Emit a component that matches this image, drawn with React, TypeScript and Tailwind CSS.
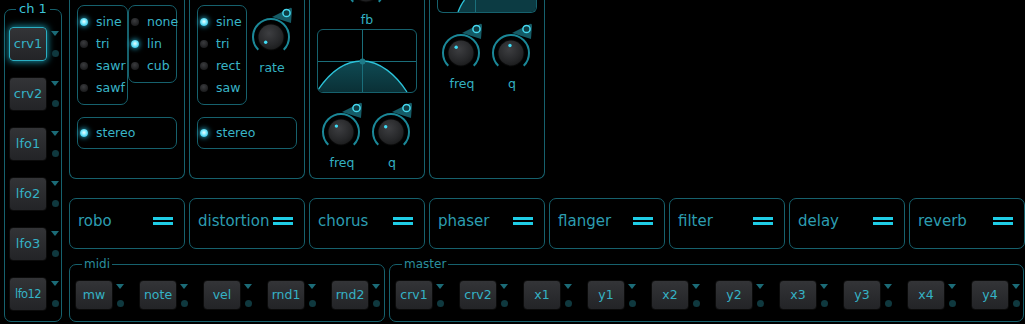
import clsx from 'clsx';

const LINE = 'border-[#16616d]';

function Led({ on }: { on?: boolean }) {
    return on ? (
        <span className="w-[8px] h-[8px] shrink-0 rounded-full bg-[radial-gradient(circle_at_50%_45%,#effeff_0%,#8aeeff_35%,#26bfe2_80%)] shadow-[0_0_5px_1px_rgba(40,200,235,0.7)]" />
    ) : (
        <span className="w-[8px] h-[8px] shrink-0 rounded-full bg-[radial-gradient(circle_at_45%_35%,#3a3b3e_0%,#232426_55%,#111112_100%)]" />
    );
}

function Radio({ label, on }: { label: string; on?: boolean }) {
    return (
        <div className="flex items-center h-[22px] gap-[8px]">
            <Led on={on} />
            <span className="text-[12.5px] leading-[14px] text-[#38b4c7]">{label}</span>
        </div>
    );
}

function Stereo() {
    return (
        <div className={clsx('mt-[12px] w-[100px] h-[32px] border rounded-[7px] flex items-center pl-[2px]', LINE)}>
            <Radio label="stereo" on />
        </div>
    );
}

function Knob({ label, angle }: { label: string; angle: number }) {
    const cx = 24;
    const cy = 32;
    const a = (angle * Math.PI) / 180;
    const dx = cx + 7.5 * Math.sin(a);
    const dy = cy - 7.5 * Math.cos(a);
    return (
        <div className="w-[50px] shrink-0 flex flex-col items-center">
            <svg width="50" height="47" viewBox="0 0 50 47" className="block">
                <defs>
                    <radialGradient id="knobFace" cx="42%" cy="35%" r="70%">
                        <stop offset="0" stopColor="#3d3e41" />
                        <stop offset="0.7" stopColor="#262729" />
                        <stop offset="1" stopColor="#1a1b1c" />
                    </radialGradient>
                </defs>
                {/* mod wedge */}
                <path
                    d={`M${cx + 1},${cy - 20} L${cx + 19},${cy - 29} Q${cx + 21},${cy - 30} ${cx + 21},${cy - 27} L${cx + 20},${cy - 14} Z`}
                    fill="#155b66"
                />
                <path
                    d={`M${cx - 12.73},${cy + 12.73} A18 18 0 1 1 ${cx + 12.73},${cy + 12.73}`}
                    fill="none"
                    stroke="#1b8898"
                    strokeWidth="2"
                />
                <circle cx={cx} cy={cy} r="13.5" fill="#080808" />
                <circle cx={cx} cy={cy} r="12.5" fill="url(#knobFace)" />
                <circle cx={dx} cy={dy} r="1.7" fill="#3fdcf5" />
                <circle cx={cx + 15.5} cy={cy - 24} r="3.6" fill="#0e3d44" stroke="#45d9f0" strokeWidth="1.5" />
            </svg>
            <span className="mt-[9px] h-[14px] leading-[14px] text-[12.5px] text-[#33b0c2]">{label}</span>
        </div>
    );
}

function Side({ big }: { big?: boolean }) {
    return (
        <div className="w-[8px] flex flex-col items-center pt-[4px]">
            <div className="w-0 h-0 border-l-[4px] border-r-[4px] border-t-[5px] border-l-transparent border-r-transparent border-t-[#1b6b77]" />
            <div className={clsx('w-[7px] h-[7px] rounded-full bg-[#0f383e]', big ? 'mt-[14px]' : 'mt-[11px]')} />
        </div>
    );
}

function Btn({ label, big, sel, tight }: { label: string; big?: boolean; sel?: boolean; tight?: boolean }) {
    return (
        <div
            className={clsx(
                'w-[38px] rounded-[4px] border flex items-center justify-center bg-gradient-to-b from-[#333437] to-[#232427]',
                big ? 'h-[34px]' : 'h-[30px]',
                sel ? 'border-[#2aaec2] shadow-[0_0_7px_1px_rgba(30,180,205,0.75)]' : 'border-[#0b0b0b]',
            )}
        >
            <span
                className={clsx(
                    'leading-[14px] text-[#35b2c5]',
                    tight ? 'text-[11.5px] tracking-[-0.6px]' : big ? 'text-[13px]' : 'text-[12.5px]',
                )}
            >
                {label}
            </span>
        </div>
    );
}

function Slot({ label, big, sel, tight }: { label: string; big?: boolean; sel?: boolean; tight?: boolean }) {
    return (
        <div className={clsx('flex', big ? 'gap-[4px]' : 'gap-[3px]')}>
            <Btn label={label} big={big} sel={sel} tight={tight} />
            <Side big={big} />
        </div>
    );
}

function Fx({ name }: { name: string }) {
    return (
        <div className={clsx('w-[116px] h-[51px] border rounded-[7px] flex items-center justify-between pl-[8px] pr-[11px] pb-[6px]', LINE)}>
            <span className="text-[15px] leading-[18px] text-[#2c9db0]">{name}</span>
            <div className="flex flex-col gap-[2px]">
                <div className="w-[20px] h-[3px] bg-[#1fcde6]" />
                <div className="w-[20px] h-[3px] bg-[#1fcde6]" />
            </div>
        </div>
    );
}

function Group({ title, width, items }: { title: string; width: string; items: string[] }) {
    return (
        <fieldset className={clsx('h-[65px] border rounded-[7px] pl-[5px] pt-[9px]', LINE, width)}>
            <legend className="ml-[7px] px-[2px] text-[12px] leading-[14px] text-[#2a8e9d]">{title}</legend>
            <div className="flex gap-[15px]">
                {items.map((it) => (
                    <Slot key={it} label={it} />
                ))}
            </div>
        </fieldset>
    );
}

const panel = clsx('w-[116px] h-[179px] border-x border-b rounded-b-[7px] pl-[7px]', LINE);

export default function App() {
    return (
        <div className="w-[1025px] h-[324px] overflow-hidden bg-black flex font-['DejaVu_Sans',sans-serif]">
            {/* channel strip */}
            <fieldset className={clsx('ml-[4px] mt-[1px] w-[58px] h-[321px] border rounded-[7px]', LINE)}>
                <legend className="mx-auto px-[3px] text-[13px] leading-[16px] text-[#3cc3d7]">ch 1</legend>
                <div className="pt-[10px] pl-[4px] flex flex-col gap-[16px]">
                    <Slot label="crv1" big sel />
                    <Slot label="crv2" big />
                    <Slot label="lfo1" big />
                    <Slot label="lfo2" big />
                    <Slot label="lfo3" big />
                    <Slot label="lfo12" big tight />
                </div>
            </fieldset>

            <div className="ml-[7px] flex flex-col">
                {/* modules */}
                <div className="flex gap-[4px]">
                    <div className={clsx(panel, 'pt-[5px]')}>
                        <div className="flex">
                            <div className={clsx('w-[51px] h-[100px] border rounded-[7px] py-[5px] pl-[2px]', LINE)}>
                                <Radio label="sine" on />
                                <Radio label="tri" />
                                <Radio label="sawr" />
                                <Radio label="sawf" />
                            </div>
                            <div className={clsx('w-[49px] h-[78px] border rounded-[7px] py-[5px] pl-[2px]', LINE)}>
                                <Radio label="none" />
                                <Radio label="lin" on />
                                <Radio label="cub" />
                            </div>
                        </div>
                        <Stereo />
                    </div>

                    <div className={clsx(panel, 'pt-[5px]')}>
                        <div className="flex">
                            <div className={clsx('w-[50px] h-[100px] border rounded-[7px] py-[5px] pl-[2px]', LINE)}>
                                <Radio label="sine" on />
                                <Radio label="tri" />
                                <Radio label="rect" />
                                <Radio label="saw" />
                            </div>
                            <Knob label="rate" angle={-135} />
                        </div>
                        <Stereo />
                    </div>

                    <div className={clsx(panel, 'overflow-hidden')}>
                        <div className="-mt-[43px] pl-[25px]">
                            <Knob label="fb" angle={0} />
                        </div>
                        <div className={clsx('mt-[2px] w-[100px] h-[64px] border rounded-[6px] overflow-hidden', LINE)}>
                            <svg width="98" height="62" className="block">
                                <defs>
                                    <linearGradient id="bpFill" x1="0" y1="0" x2="0" y2="1">
                                        <stop offset="0" stopColor="#0f4a53" />
                                        <stop offset="1" stopColor="#0a3036" />
                                    </linearGradient>
                                </defs>
                                <path d="M0,60 C8,48 22,31 44,31 C62,31 78,45 89,62 L0,62 Z" fill="url(#bpFill)" />
                                <line x1="44.5" y1="0" x2="44.5" y2="62" stroke="#1a6e7a" />
                                <line x1="0" y1="31.5" x2="98" y2="31.5" stroke="#1a6e7a" />
                                <path d="M0,60 C8,48 22,31 44,31 C62,31 78,45 89,62" fill="none" stroke="#2cc2d8" strokeWidth="1.3" />
                                <circle cx="44.5" cy="31.5" r="3" fill="#1e7b88" />
                            </svg>
                        </div>
                        <div className="mt-[7px] flex">
                            <Knob label="freq" angle={-38} />
                            <Knob label="q" angle={-45} />
                        </div>
                    </div>

                    <div className={panel}>
                        <div className={clsx('w-[100px] h-[13px] border-x border-b rounded-b-[6px] overflow-hidden', LINE)}>
                            <svg width="98" height="12" className="block">
                                <path d="M20,12 C22,7 24,3 26.5,0 L98,0 L98,12 Z" fill="#0c3b43" />
                                <line x1="37.5" y1="0" x2="37.5" y2="12" stroke="#1a6f7b" />
                                <path d="M20,12 C22,7 24,3 26.5,0" fill="none" stroke="#2cc2d8" strokeWidth="1.3" />
                            </svg>
                        </div>
                        <div className="mt-[8px] flex">
                            <Knob label="freq" angle={-40} />
                            <Knob label="q" angle={-8} />
                        </div>
                    </div>
                </div>

                {/* effects */}
                <div className="mt-[19px] flex gap-[4px]">
                    {['robo', 'distortion', 'chorus', 'phaser', 'flanger', 'filter', 'delay', 'reverb'].map((n) => (
                        <Fx key={n} name={n} />
                    ))}
                </div>

                {/* sources */}
                <div className="mt-[8px] flex gap-[4px]">
                    <Group title="midi" width="w-[316px]" items={['mw', 'note', 'vel', 'rnd1', 'rnd2']} />
                    <Group
                        title="master"
                        width="w-[635px]"
                        items={['crv1', 'crv2', 'x1', 'y1', 'x2', 'y2', 'x3', 'y3', 'x4', 'y4']}
                    />
                </div>
            </div>
        </div>
    );
}
